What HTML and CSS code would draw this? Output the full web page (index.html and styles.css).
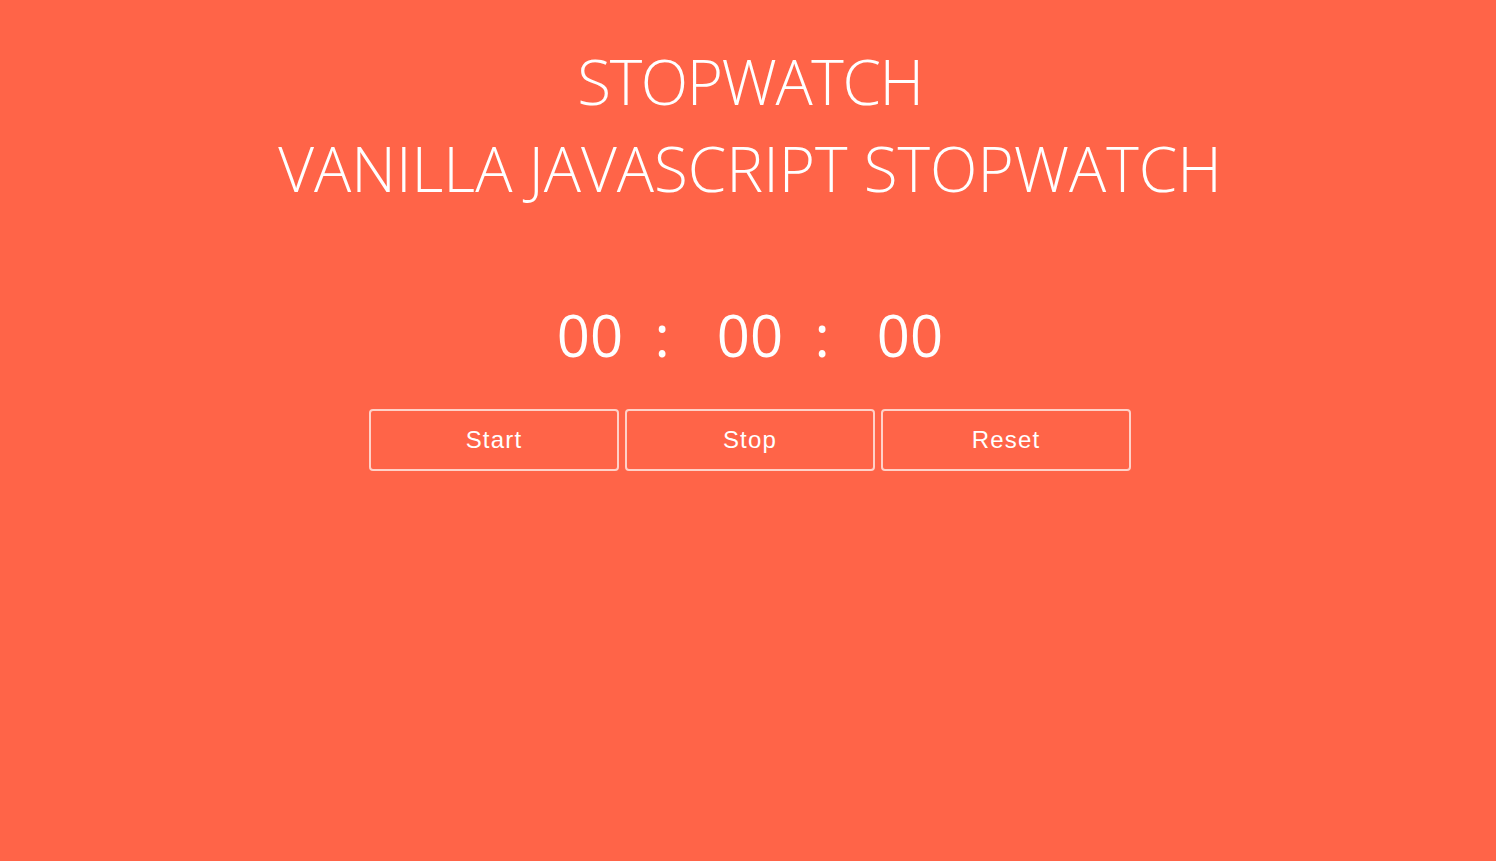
FILE: index.html
```html
<!DOCTYPE html>
<html>
<head>
<meta charset="utf-8">
<link rel="stylesheet" href="styles.css">
</head>
<body>
<div class="wrapper">
  <h1 class="title">STOPWATCH</h1>
  <h2 class="subtitle">VANILLA JAVASCRIPT STOPWATCH</h2>
  <div class="timer">
    <span class="num">00</span><span class="colon">:</span><span class="num">00</span><span class="colon">:</span><span class="num">00</span>
  </div>
  <div class="buttons">
    <button class="btn">Start</button>
    <button class="btn">Stop</button>
    <button class="btn">Reset</button>
  </div>
</div>
</body>
</html>
```

FILE: styles.css
```css
html, body {
  margin: 0;
  padding: 0;
}
body {
  background: #ff6448;
  color: #fff;
  font-family: "Open Sans", "Noto Sans", sans-serif;
  min-height: 861px;
}
.wrapper {
  display: flex;
  flex-direction: column;
  align-items: center;
  padding-top: 38px;
  padding-left: 4px;
}
.title, .subtitle {
  margin: 0;
  font-weight: 300;
  font-size: 62px;
  line-height: 87px;
}
.title {
  letter-spacing: -1.4px;
}
.subtitle {
  letter-spacing: 0;
}
.timer {
  margin-top: 83px;
  display: flex;
  align-items: center;
  font-size: 58px;
  font-weight: 400;
  line-height: 80px;
}
.num {
  width: 100px;
  text-align: center;
}
.colon {
  width: 60px;
  padding-right: 16px;
  box-sizing: border-box;
  text-align: center;
}
.buttons {
  margin-top: 34px;
  display: flex;
  gap: 6px;
}
.btn {
  width: 250px;
  height: 62px;
  background: transparent;
  border: 2px solid rgba(255, 255, 255, 0.7);
  border-radius: 4px;
  color: #fff;
  font-family: "Liberation Sans", Arial, sans-serif;
  font-size: 24px;
  letter-spacing: 1.2px;
  padding: 0;
}
```
